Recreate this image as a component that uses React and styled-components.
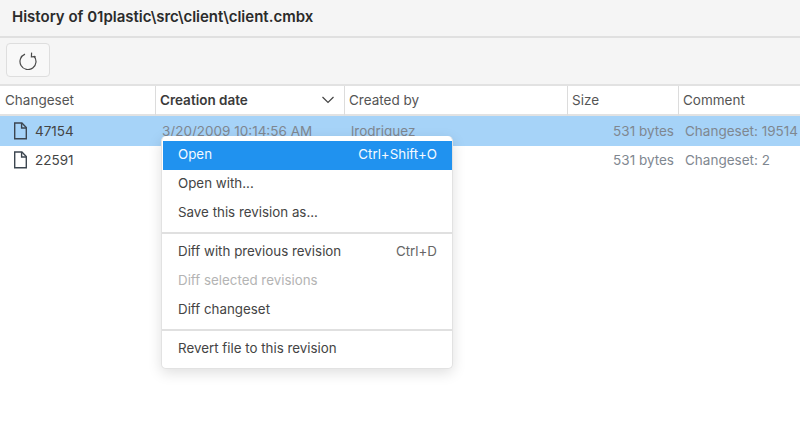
import React from "react";
import styled, { createGlobalStyle } from "styled-components";

const Global = createGlobalStyle`
  html, body { margin: 0; padding: 0; background: #fff; }
  body { font-family: Inter, "Liberation Sans", sans-serif; overflow: hidden; }
  * { box-sizing: border-box; }
`;
const Page = styled.div`
  position: relative;
  width: 800px;
  height: 423px;
  overflow: hidden;
  background: #fff;
`;
const TitleBar = styled.div`
  height: 38px;
  padding: 0 12px 4px;
  display: flex;
  align-items: center;
  background: #f5f5f5;
  border-bottom: 2px solid #e0e0e0;
  font-size: 15px;
  font-weight: 600;
  color: #2b2b2b;
  white-space: nowrap;
`;
const Toolbar = styled.div`
  height: 48px;
  padding: 5px 6px 0;
  background: #f5f5f5;
  border-bottom: 2px solid #e2e2e2;
`;
const ToolButton = styled.button`
  width: 44px;
  height: 34px;
  padding: 0;
  display: flex;
  align-items: center;
  justify-content: center;
  background: #f8f8f8;
  border: 1px solid #dedede;
  border-radius: 4px;
  color: #4a4a4a;
`;
const Grid = styled.div`
  display: grid;
  grid-template-columns: 155px 189px 223px 111px 122px;
`;
const HeaderCell = styled.div`
  height: 30px;
  padding-left: ${(p) => (p.$first ? "5px" : "4px")};
  display: flex;
  align-items: center;
  justify-content: space-between;
  background: #fff;
  border-bottom: 2px solid #e2e2e2;
  border-left: ${(p) => (p.$first ? "none" : "1.5px solid #dcdcdc")};
  font-size: 13.5px;
  font-weight: ${(p) => (p.$active ? 600 : 400)};
  color: ${(p) => (p.$active ? "#3a3a3a" : "#555")};
  white-space: nowrap;
  overflow: hidden;
`;
const Arrow = styled.svg`
  width: 14px;
  height: 8px;
  margin-right: 9px;
  flex: none;
`;
const Row = styled.div`
  grid-column: 1 / -1;
  display: grid;
  grid-template-columns: subgrid;
  height: 29.5px;
  background: ${(p) => (p.$selected ? "#a6d3f8" : "#fff")};
  font-size: 13.5px;
  align-items: center;
`;
const NameCell = styled.div`
  display: flex;
  align-items: center;
  gap: 7px;
  padding-left: 13px;
  color: #444;
`;
const MutedCell = styled.div`
  color: #7f8790;
  padding-left: 7px;
  padding-right: ${(p) => p.$right || "0"};
  text-align: ${(p) => p.$align || "left"};
  white-space: nowrap;
  overflow: hidden;
`;
const Menu = styled.div`
  position: absolute;
  left: 161px;
  top: 136px;
  width: 292px;
  height: 233px;
  padding: 5px 0 0 1px;
  background: #fff;
  border: 1px solid #e2e2e2;
  border-top: none;
  border-radius: 5px;
  box-shadow: 0 4px 14px rgba(0, 0, 0, 0.13);
`;
const Item = styled.div`
  height: 29px;
  padding: 0 15px 3px;
  display: flex;
  align-items: center;
  justify-content: space-between;
  font-size: 13.35px;
  background: ${(p) => (p.$active ? "#2092ef" : "transparent")};
  color: ${(p) => (p.$active ? "#f4faff" : p.$disabled ? "#b4b4b4" : "#444")};
`;
const Shortcut = styled.span`
  color: ${(p) => (p.$active ? "#f4faff" : "#666")};
`;
const Divider = styled.div`
  height: 2px;
  margin: 4px 0 4px -1px;
  background: #e0e0e0;
`;

const FileIcon = () => (
  <svg width="15" height="18" viewBox="0 0 15 18" fill="none" stroke="#3d4650" strokeWidth="1.4" strokeLinejoin="miter">
    <path d="M1.7 1h7.2l4.4 4.6V16.8H1.7Z" />
    <path d="M8.6 1v5h4.7" />
  </svg>
);
const RefreshIcon = () => (
  <svg width="20" height="20" viewBox="0 0 20 20" fill="none" stroke="#4a4a4a" strokeWidth="1.2">
    <path d="M7 4.1A8 8 0 1 0 15.8 6" />
    <path d="M13.6 2.6 L13.4 6.8 L17.6 6.6" />
  </svg>
);

const rows = [
  { id: "47154", date: "3/20/2009 10:14:56 AM", by: "lrodriguez", comment: "Changeset: 19514", selected: true },
  { id: "22591", date: "", by: "", comment: "Changeset: 2" },
];

export default function App() {
  return (
    <Page>
      <Global />
      <TitleBar>History of 01plastic\src\client\client.cmbx</TitleBar>
      <Toolbar>
        <ToolButton aria-label="Refresh"><RefreshIcon /></ToolButton>
      </Toolbar>
      <Grid>
        <HeaderCell $first>Changeset</HeaderCell>
        <HeaderCell $active>
          Creation date
          <Arrow viewBox="0 0 14 8" fill="none" stroke="#444" strokeWidth="1.2"><path d="M1.5 1 7 6.5 12.5 1" /></Arrow>
        </HeaderCell>
        <HeaderCell>Created by</HeaderCell>
        <HeaderCell>Size</HeaderCell>
        <HeaderCell>Comment</HeaderCell>
        {rows.map((r) => (
          <Row key={r.id} $selected={r.selected}>
            <NameCell><FileIcon />{r.id}</NameCell>
            <MutedCell>{r.date}</MutedCell>
            <MutedCell>{r.by}</MutedCell>
            <MutedCell $align="right" $right="4px">531 bytes</MutedCell>
            <MutedCell>{r.comment}</MutedCell>
          </Row>
        ))}
      </Grid>
      <Menu>
        <Item $active>Open<Shortcut $active>Ctrl+Shift+O</Shortcut></Item>
        <Item>Open with...</Item>
        <Item>Save this revision as...</Item>
        <Divider />
        <Item>Diff with previous revision<Shortcut>Ctrl+D</Shortcut></Item>
        <Item $disabled>Diff selected revisions</Item>
        <Item>Diff changeset</Item>
        <Divider />
        <Item>Revert file to this revision</Item>
      </Menu>
    </Page>
  );
}
